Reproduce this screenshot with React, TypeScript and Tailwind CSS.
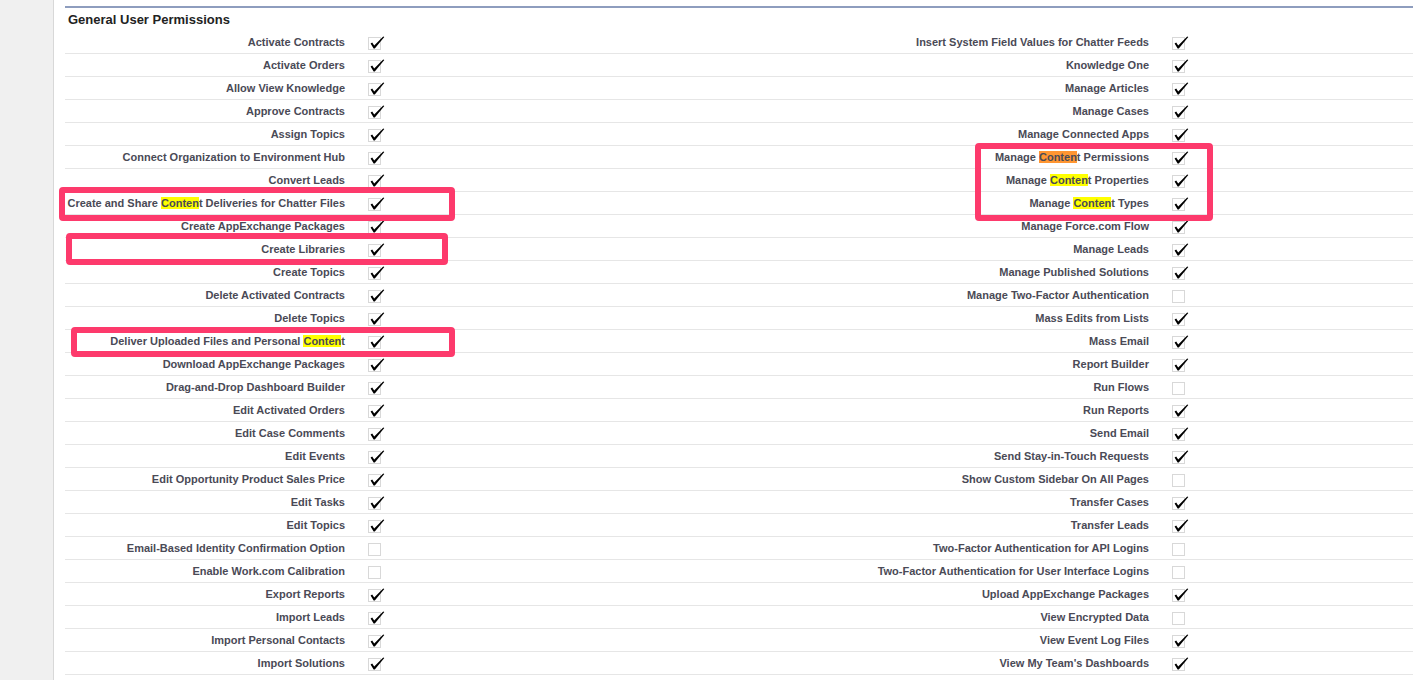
import React from "react"

type Perm = { label: string; on: boolean; hl?: "yellow" | "orange" }

const left: Perm[] = [
  { label: "Activate Contracts", on: true },
  { label: "Activate Orders", on: true },
  { label: "Allow View Knowledge", on: true },
  { label: "Approve Contracts", on: true },
  { label: "Assign Topics", on: true },
  { label: "Connect Organization to Environment Hub", on: true },
  { label: "Convert Leads", on: true },
  { label: "Create and Share Content Deliveries for Chatter Files", on: true, hl: "yellow" },
  { label: "Create AppExchange Packages", on: true },
  { label: "Create Libraries", on: true },
  { label: "Create Topics", on: true },
  { label: "Delete Activated Contracts", on: true },
  { label: "Delete Topics", on: true },
  { label: "Deliver Uploaded Files and Personal Content", on: true, hl: "yellow" },
  { label: "Download AppExchange Packages", on: true },
  { label: "Drag-and-Drop Dashboard Builder", on: true },
  { label: "Edit Activated Orders", on: true },
  { label: "Edit Case Comments", on: true },
  { label: "Edit Events", on: true },
  { label: "Edit Opportunity Product Sales Price", on: true },
  { label: "Edit Tasks", on: true },
  { label: "Edit Topics", on: true },
  { label: "Email-Based Identity Confirmation Option", on: false },
  { label: "Enable Work.com Calibration", on: false },
  { label: "Export Reports", on: true },
  { label: "Import Leads", on: true },
  { label: "Import Personal Contacts", on: true },
  { label: "Import Solutions", on: true },
]

const right: Perm[] = [
  { label: "Insert System Field Values for Chatter Feeds", on: true },
  { label: "Knowledge One", on: true },
  { label: "Manage Articles", on: true },
  { label: "Manage Cases", on: true },
  { label: "Manage Connected Apps", on: true },
  { label: "Manage Content Permissions", on: true, hl: "orange" },
  { label: "Manage Content Properties", on: true, hl: "yellow" },
  { label: "Manage Content Types", on: true, hl: "yellow" },
  { label: "Manage Force.com Flow", on: true },
  { label: "Manage Leads", on: true },
  { label: "Manage Published Solutions", on: true },
  { label: "Manage Two-Factor Authentication", on: false },
  { label: "Mass Edits from Lists", on: true },
  { label: "Mass Email", on: true },
  { label: "Report Builder", on: true },
  { label: "Run Flows", on: false },
  { label: "Run Reports", on: true },
  { label: "Send Email", on: true },
  { label: "Send Stay-in-Touch Requests", on: true },
  { label: "Show Custom Sidebar On All Pages", on: false },
  { label: "Transfer Cases", on: true },
  { label: "Transfer Leads", on: true },
  { label: "Two-Factor Authentication for API Logins", on: false },
  { label: "Two-Factor Authentication for User Interface Logins", on: false },
  { label: "Upload AppExchange Packages", on: true },
  { label: "View Encrypted Data", on: false },
  { label: "View Event Log Files", on: true },
  { label: "View My Team's Dashboards", on: true },
]

// wraps the "Conten" part of a label, like the browser's find highlight
function Label({ perm }: { perm: Perm }) {
  if (!perm.hl) return <>{perm.label}</>
  const i = perm.label.indexOf("Conten")
  const bg = perm.hl === "orange" ? "bg-[#ff9632]" : "bg-[#ffff00]"
  return (
    <>
      {perm.label.slice(0, i)}
      <span className={bg}>Conten</span>
      {perm.label.slice(i + 6)}
    </>
  )
}

function Checkbox({ on }: { on: boolean }) {
  return (
    <svg width="17" height="15" viewBox="0 0 17 15" className="mt-[5px]">
      <rect x="0.5" y="1.5" width="12" height="12" fill="none" stroke="#b0b0b0" strokeWidth="1" strokeDasharray="1 1" />
      {on && <path d="M2.6 7.4 L4.2 6.4 L6.2 9.4 L15.2 0.4 L16.3 1.1 L6.8 12.5 L5.6 12.5 Z" fill="#000" />}
    </svg>
  )
}

function Row({ l, r }: { l: Perm; r: Perm }) {
  const cell = "h-[23px] border-b border-[#e6e6e6]"
  const label = `${cell} flex items-center justify-end pr-[10px] whitespace-nowrap text-[11px] leading-[13px] font-bold text-[#4a4a56]`
  const data = `${cell} flex items-start pl-[13px]`
  return (
    <>
      <div className={label}><span><Label perm={l} /></span></div>
      <div className={data}><Checkbox on={l.on} /></div>
      <div className={label}><span><Label perm={r} /></span></div>
      <div className={data}><Checkbox on={r.on} /></div>
    </>
  )
}

export default function App() {
  return (
    <div className="relative flex h-[680px] w-[1417px] overflow-hidden bg-white" style={{ fontFamily: '"Liberation Sans", Arial, Helvetica, sans-serif' }}>
      <div className="w-[54px] shrink-0 bg-[#f0f0f0] border-r border-[#d8d8d8]" />
      <div className="flex-1 pl-[11px] pr-[4px] pt-[6px]">
        <div className="border-t-2 border-[#8e9dbe] pl-[3px] pt-[4px] pb-[4px] text-[13px] leading-[15px] font-bold text-[#222]">
          General User Permissions
        </div>
        <div className="grid grid-cols-[290px_514px_290px_1fr]">
          {left.map((p, i) => (
            <Row key={p.label} l={p} r={right[i]} />
          ))}
        </div>
      </div>

      {/* annotation boxes drawn over the table */}
      <div className="absolute left-[59px] top-[187px] w-[396px] h-[34px] rounded-[4px] border-[6px] border-[#fd3a6c]" />
      <div className="absolute left-[66px] top-[233px] w-[382px] h-[32px] rounded-[4px] border-[6px] border-[#fd3a6c]" />
      <div className="absolute left-[71px] top-[327px] w-[384px] h-[30px] rounded-[4px] border-[6px] border-[#fd3a6c]" />
      <div className="absolute left-[975px] top-[143px] w-[238px] h-[78px] rounded-[4px] border-[6px] border-[#fd3a6c]" />
    </div>
  )
}
